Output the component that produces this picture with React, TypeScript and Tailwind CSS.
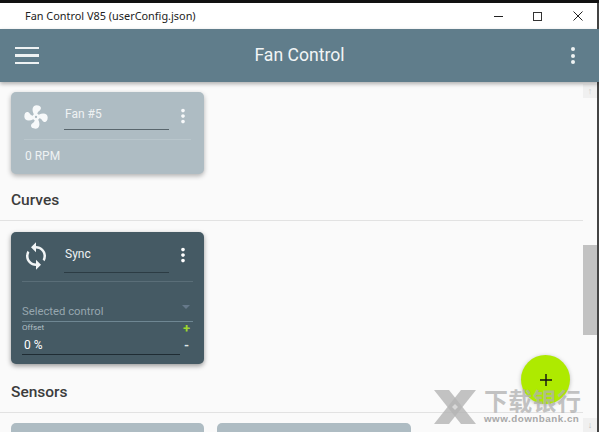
import React from 'react';
import { MdSync, MdMoreVert } from 'react-icons/md';

function FanIcon({ className }: { className?: string }) {
  return (
    <svg viewBox="0 0 24 24" className={className} fill="currentColor">
      <path d="M12,11A1,1 0 0,0 11,12A1,1 0 0,0 12,13A1,1 0 0,0 13,12A1,1 0 0,0 12,11M12.5,2C17,2 17.11,5.57 14.75,6.75C13.76,7.24 13.32,8.29 13.13,9.22C13.61,9.42 14.03,9.73 14.35,10.13C18.05,8.13 22.03,8.92 22.03,12.5C22.03,17 18.46,17.1 17.28,14.73C16.78,13.74 15.72,13.3 14.79,13.11C14.59,13.59 14.28,14 13.88,14.34C15.87,18.03 15.08,22 11.5,22C7,22 6.91,18.42 9.27,17.24C10.25,16.75 10.69,15.71 10.89,14.79C10.4,14.59 9.97,14.27 9.65,13.87C5.96,15.85 2,15.07 2,11.5C2,7 5.56,6.89 6.74,9.26C7.24,10.25 8.29,10.68 9.22,10.87C9.41,10.39 9.73,9.97 10.14,9.65C8.15,5.96 8.94,2 12.5,2Z" fillRule="evenodd" />
    </svg>
  );
}

function TitleBar() {
  return (
    <div className="h-[26px] bg-white flex items-center text-[#222] shrink-0">
      <span className="ml-[25px] text-[10.9px] font-['Noto_Sans',sans-serif]">Fan Control V85 (userConfig.json)</span>
      <div className="ml-auto flex items-center mr-[10px]">
        <div className="w-[9px] h-[1px] bg-[#222] mr-[30px]" />
        <div className="w-[9px] h-[9px] border border-[#333] mr-[31px]" />
        <svg viewBox="0 0 10 10" className="w-[10px] h-[10px] text-[#222] mr-[6px]" stroke="currentColor" strokeWidth="1" fill="none">
          <path d="M0.5 0.5L9.5 9.5M9.5 0.5L0.5 9.5" />
        </svg>
      </div>
    </div>
  );
}

function AppBar() {
  return (
    <div className="relative z-10 h-[53px] bg-[#607d8b] shadow-[0_2px_4px_rgba(0,0,0,0.3)] flex items-center justify-between pl-[15px] pr-[15px] text-white shrink-0">
      <div className="w-[40px]">
        <div className="flex flex-col gap-[5px] w-[24px]">
          <div className="h-[2.5px] bg-[#eef2f3]" />
          <div className="h-[2.5px] bg-[#eef2f3]" />
          <div className="h-[2.5px] bg-[#eef2f3]" />
        </div>
      </div>
      <span className="text-[17.6px] text-[#f2f5f6]">Fan Control</span>
      <div className="w-[40px] pr-[9px] flex flex-col gap-[2.5px] items-end">
        <div className="w-[4px] h-[4px] rounded-full bg-[#eef2f3]" />
        <div className="w-[4px] h-[4px] rounded-full bg-[#eef2f3]" />
        <div className="w-[4px] h-[4px] rounded-full bg-[#eef2f3]" />
      </div>
    </div>
  );
}

function FanCard() {
  return (
    <div className="w-[193px] h-[82px] rounded-[5px] bg-[#aebcc3] shadow-[0_2px_5px_rgba(0,0,0,0.3)] px-[13px] text-[#eef2f3] flex flex-col">
      <div className="h-[48px] flex items-start border-b border-[#b9c6cc] shrink-0">
        <FanIcon className="w-[28px] h-[28px] mt-[11px] ml-[-2px] shrink-0 text-[#f7f9fa]" />
        <div className="ml-[14px] w-[105px] h-[38px] shrink-0 border-b border-[#59666d] pl-[1px] pt-[14px] text-[12px] leading-[16px]">Fan #5</div>
        <MdMoreVert className="w-[22px] h-[22px] mt-[13px] ml-[3px] shrink-0 text-[#f7f9fa]" />
      </div>
      <div className="mt-[8px] text-[12px] leading-[16px] ml-[-1px] pl-[2px]">0 RPM</div>
    </div>
  );
}

function SyncCard() {
  return (
    <div className="w-[193px] h-[132px] rounded-[5px] bg-[#455a64] shadow-[0_2px_5px_rgba(0,0,0,0.4)] px-[11px] text-[#eef2f3] flex flex-col">
      <div className="h-[50px] flex items-start border-b border-[#5a6e78] shrink-0">
        <MdSync className="w-[30px] h-[30px] mt-[9px] ml-[-1px] shrink-0 text-[#f2f5f6]" />
        <div className="ml-[13px] w-[105px] h-[41px] shrink-0 border-b border-[#2c3c44] pl-[1px] pt-[14px] text-[12px] leading-[16px]">Sync</div>
        <MdMoreVert className="w-[22px] h-[22px] mt-[12px] ml-[3px] shrink-0 text-white" />
      </div>
      <div className="relative h-[40px] border-b-[1.5px] border-[#6f8793] flex items-end shrink-0">
        <span className="text-[11.3px] leading-[15px] mb-[2px] text-[#97a7af]">Selected control</span>
        <div className="absolute right-[3px] top-[23px] w-0 h-0 border-x-[4px] border-x-transparent border-t-[4px] border-t-[#66798a]" />
      </div>
      <div className="flex">
        <div className="w-[158px]">
          <div className="text-[8px] leading-[11px] text-[#b4c0c6]">Offset</div>
          <div className="h-[21px] mt-[1px] border-b border-[#1f2c33] pl-[2px] text-[12px] leading-[23px] text-white">0 %</div>
        </div>
        <div className="flex-1 flex flex-col items-center text-[13px] font-bold leading-[14px]">
          <span className="text-[#9ed62f]">+</span>
          <span className="mt-[3px] text-[#dfe6e9]">-</span>
        </div>
      </div>
    </div>
  );
}

function SectionHeader({ title }: { title: string }) {
  return (
    <div className="border-b border-[#e2e2e2] h-[31px] pl-[11px]">
      <h2 className="text-[15.5px] leading-[20px] font-medium text-[#3c3c3c]">{title}</h2>
    </div>
  );
}

function Scrollbar() {
  return (
    <div className="w-[14px] bg-[#fafafa] flex flex-col shrink-0">
      <div className="h-[14px] mt-[2px] bg-[#f0f0f0] text-[#cfcfcf] text-[9px] leading-[14px] text-center">↑</div>
      <div className="h-[90px] mt-[147px] bg-[#c2c2c2]" />
      <div className="h-[14px] mt-auto bg-[#f0f0f0] text-[#bbb] text-[9px] leading-[14px] text-center">↓</div>
    </div>
  );
}

function Watermark() {
  return (
    <div className="absolute left-[434px] top-[389px] flex items-start">
      <svg viewBox="0 0 42 34" className="w-[42px] h-[34px] mt-[1px]" fill="#b4b4b4" fillOpacity="0.8">
        <path d="M0 0H15L42 34H27Z" />
        <path d="M42 0H27L0 34H15Z" />
        <path d="M21 14L24 17L21 20L18 17Z" fill="#d8d8d8" fillOpacity="1" />
      </svg>
      <div className="ml-[8px] flex flex-col">
        <span className="text-[24px] leading-[22px] font-bold tracking-[0.3px] text-[#b0b0b0]/75 font-['Noto_Sans_CJK_SC',sans-serif]">下载银行</span>
        <span className="mt-[2px] text-[9.8px] leading-[12px] tracking-[0.5px] font-bold text-[#a8a8a8] font-['Liberation_Sans',sans-serif]">www.downbank.cn</span>
      </div>
    </div>
  );
}

export default function App() {
  return (
    <div className="relative w-[599px] h-[432px] overflow-hidden bg-[#fafafa] font-['Roboto',sans-serif] flex flex-col">
      <div className="h-[3px] bg-[#111] shrink-0" />
      <TitleBar />
      <AppBar />
      <div className="flex-1 min-h-0 flex pr-[2px] overflow-hidden">
        <div className="flex-1 min-w-0 overflow-hidden">
          <div className="mt-[10px] ml-[11px]">
            <FanCard />
          </div>
          <div className="mt-[16px]">
            <SectionHeader title="Curves" />
          </div>
          <div className="mt-[11px] ml-[11px]">
            <SyncCard />
          </div>
          <div className="mt-[18px]">
            <SectionHeader title="Sensors" />
          </div>
          <div className="mt-[10px] ml-[11px] flex gap-[13px]">
            <div className="w-[193px] h-[40px] rounded-[5px] bg-[#aebcc3]" />
            <div className="w-[194px] h-[40px] rounded-[5px] bg-[#aebcc3]" />
          </div>
        </div>
        <Scrollbar />
      </div>
      <div className="absolute right-0 top-[3px] bottom-0 w-[2px] bg-[#444]" />
      <button className="absolute left-[521px] top-[355px] w-[49px] h-[49px] rounded-full bg-[#aeea00] shadow-[0_1px_4px_rgba(0,0,0,0.25)] flex items-center justify-center">
        <svg viewBox="0 0 12 12" className="w-[12px] h-[12px] text-[#111]" stroke="currentColor" strokeWidth="1.4">
          <path d="M6 0V12M0 6H12" />
        </svg>
      </button>
      <Watermark />
    </div>
  );
}
